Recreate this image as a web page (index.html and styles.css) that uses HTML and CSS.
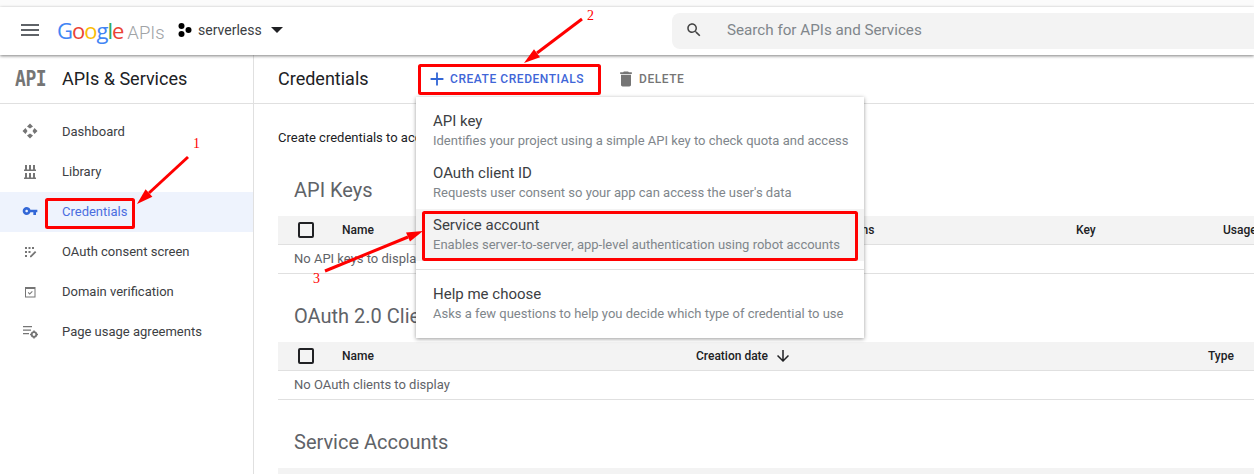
FILE: index.html
```html
<!DOCTYPE html>
<html lang="en">

<head>
  <meta charset="UTF-8" />
  <title>Credentials - APIs &amp; Services</title>
  <link rel="stylesheet" href="styles.css">
</head>

<body>
  <div class="top-strip"></div>

  <header class="topbar">
    <svg class="menu-icon" viewBox="0 0 24 24"><path d="M3 18h18v-2H3v2zm0-5h18v-2H3v2zm0-7v2h18V6H3z" /></svg>
    <div class="logo">
      <span class="logo-google"><span class="blue">G</span><span class="red">o</span><span class="yellow">o</span><span class="blue">g</span><span class="green">l</span><span class="red">e</span></span>
      <span class="logo-apis">APIs</span>
    </div>
    <div class="project">
      <svg class="project-dots" viewBox="0 0 14 14"><circle cx="3.500" cy="3" r="3" /><circle cx="3.500" cy="11" r="3" /><circle cx="10.500" cy="7" r="3" /></svg>
      <span>serverless</span>
      <span class="caret"></span>
    </div>
    <div class="search">
      <svg class="search-icon" viewBox="0 0 24 24"><path d="M15.500 14h-.79l-.28-.27C15.410 12.590 16 11.110 16 9.500 16 5.910 13.090 3 9.500 3S3 5.910 3 9.500 5.910 16 9.500 16c1.610 0 3.090-.59 4.230-1.570l.27.28v.79l5 4.990L20.490 19l-4.990-5zm-6 0C7.010 14 5 11.990 5 9.500S7.010 5 9.500 5 14 7.010 14 9.500 11.990 14 9.500 14z" /></svg>
      <span>Search for APIs and Services</span>
    </div>
  </header>

  <div class="main">
    <aside class="sidebar">
      <div class="sidebar-head">
        <span class="api-badge"><span class="api-text">API</span></span>
        <span>APIs &amp; Services</span>
      </div>
      <nav class="nav">
        <a class="nav-item">
          <svg viewBox="0 0 16 16"><path d="M8 .5L11 3.500 8 5.500 5 3.500zM8 15.500L5 12.500 8 10.500 11 12.500zM.5 8L3.500 5 5.500 8 3.500 11zM15.500 8L12.500 11 10.500 8 12.500 5z" /></svg>
          Dashboard
        </a>
        <a class="nav-item">
          <svg viewBox="0 0 16 16"><path d="M3 2h2v4.500H3zM7 2h2v4.500H7zM11 2h2v4.500h-2zM2 6.500h12V8H2zM3 10h2v4.500H3zM7 10h2v4.500H7zM11 10h2v4.500h-2zM2 14.500h12V16H2z" /></svg>
          Library
        </a>
        <a class="nav-item active">
          <svg viewBox="0 0 24 24"><path d="M12.650 10C11.830 7.670 9.610 6 7 6c-3.310 0-6 2.690-6 6s2.690 6 6 6c2.610 0 4.830-1.670 5.650-4H17v4h4v-4h2v-4H12.650zM7 14c-1.100 0-2-.9-2-2s.9-2 2-2 2 .9 2 2-.9 2-2 2z" /></svg>
          Credentials
        </a>
        <a class="nav-item">
          <svg viewBox="0 0 16 16"><path d="M3 4h2v2H3zM6.500 4h2v2h-2zM10 4h2v2h-2zM3 8h2v2H3zM6.500 8h2v2h-2zM3 12h2v2H3zM8 13l5-5 1.300 1.300-5 5H8z" /></svg>
          OAuth consent screen
        </a>
        <a class="nav-item">
          <svg viewBox="0 0 16 16"><path d="M3 4h10.500v10.500H3zM4 6v7.500h8.500V6z" fill-rule="evenodd" /><path d="M5.800 9.800l.7-.7 1.200 1.200 2.300-2.300.7.700-3 3z" /></svg>
          Domain verification
        </a>
        <a class="nav-item">
          <svg viewBox="0 0 16 16"><path d="M1 3h9v1.300H1zM1 6.500h8v1.300H1zM1 10h6v1.300H1z" /><circle cx="12" cy="11.500" r="2.300" fill="none" stroke="#757575" stroke-width="1.800" /><path d="M11.200 7.500h1.600v1.500h-1.600zM11.200 14h1.600v1.500h-1.600zM8 10.700h1.500v1.600H8zM14.500 10.700H16v1.600h-1.500z" /></svg>
          Page usage agreements
        </a>
      </nav>
    </aside>

    <section class="content">
      <div class="actionbar">
        <h1 class="page-title">Credentials</h1>
        <button class="btn btn-primary">
          <svg viewBox="0 0 24 24"><path d="M19 13h-6v6h-2v-6H5v-2h6V5h2v6h6v2z" /></svg>
          CREATE CREDENTIALS
        </button>
        <button class="btn btn-delete">
          <svg viewBox="0 0 24 24"><path d="M6 19c0 1.100.9 2 2 2h8c1.100 0 2-.9 2-2V7H6v12zM19 4h-3.500l-1-1h-5l-1 1H5v2h14V4z" /></svg>
          DELETE
        </button>
      </div>

      <div class="body">
        <p class="intro">Create credentials to access your enabled APIs</p>

        <h2 class="section-title first">API Keys</h2>
        <div class="table">
          <div class="table-head cols-keys">
            <span class="checkbox"></span>
            <span>Name</span>
            <span>Restrictions</span>
            <span>Key</span>
            <span>Usage</span>
          </div>
          <div class="table-empty">No API keys to display</div>
        </div>

        <h2 class="section-title">OAuth 2.0 Client IDs</h2>
        <div class="table">
          <div class="table-head cols-oauth">
            <span class="checkbox"></span>
            <span>Name</span>
            <span class="sorted">Creation date
              <svg viewBox="0 0 24 24"><path d="M20 12l-1.410-1.410L13 16.170V4h-2v12.170l-5.580-5.590L4 12l8 8 8-8z" /></svg>
            </span>
            <span>Type</span>
          </div>
          <div class="table-empty">No OAuth clients to display</div>
        </div>

        <h2 class="section-title">Service Accounts</h2>
        <div class="table">
          <div class="table-head"></div>
        </div>
      </div>

      <div class="menu">
        <div class="menu-item">
          <div class="menu-title">API key</div>
          <div class="menu-desc">Identifies your project using a simple API key to check quota and access</div>
        </div>
        <div class="menu-item">
          <div class="menu-title">OAuth client ID</div>
          <div class="menu-desc">Requests user consent so your app can access the user's data</div>
        </div>
        <div class="menu-item hover">
          <div class="menu-title">Service account</div>
          <div class="menu-desc">Enables server-to-server, app-level authentication using robot accounts</div>
        </div>
        <div class="menu-divider"></div>
        <div class="menu-item">
          <div class="menu-title">Help me choose</div>
          <div class="menu-desc">Asks a few questions to help you decide which type of credential to use</div>
        </div>
      </div>
    </section>
  </div>

  <!-- red marks drawn on top of the screenshot -->
  <svg class="marks" viewBox="0 0 1254 474">
    <rect x="46.500" y="199.500" width="87" height="28" rx="1" />
    <rect x="419.500" y="65.500" width="180" height="28" rx="1" />
    <rect x="423.500" y="212.500" width="433" height="47" rx="1" />
    <line x1="188" y1="157" x2="149" y2="193" />
    <polygon points="137,204 145.600,189.300 152.400,196.700" />
    <line x1="582" y1="19" x2="537" y2="53" />
    <polygon points="524,63 534,49.300 540,57.300" />
    <line x1="325" y1="271" x2="408" y2="237" />
    <polygon points="423,231 406,232.400 410,241.600" />
    <text x="193" y="148">1</text>
    <text x="587" y="20">2</text>
    <text x="313" y="283">3</text>
  </svg>
</body>

</html>
```

FILE: styles.css
```css
* {
  box-sizing: border-box;
  margin: 0;
  padding: 0;
}

html,
body {
  height: 474px;
  overflow: hidden;
}

body {
  font-family: Roboto, Arial, sans-serif;
  background-color: #fff;
  color: #202124;
  position: relative;
}

svg {
  flex-shrink: 0;
  display: block;
}

.top-strip {
  height: 7px;
  background-color: #fbfbfb;
}

/* Top bar */
.topbar {
  position: relative;
  z-index: 2;
  height: 48px;
  display: flex;
  align-items: center;
  background-color: #fff;
  box-shadow: 0 1px 3px rgba(0, 0, 0, 0.5);
}

.menu-icon {
  width: 24px;
  height: 24px;
  margin-left: 18px;
  margin-top: -3px;
  fill: #5f6368;
}

.logo {
  display: flex;
  align-items: baseline;
  margin-left: 15px;
  margin-top: -3px;
  white-space: nowrap;
}

.logo-google {
  font-family: "Open Sans", sans-serif;
  font-size: 22px;
  letter-spacing: -1px;
}

.logo-apis {
  margin-left: 4px;
  color: #a0a3a6;
  font-size: 18.500px;
  font-weight: 300;
}

.blue { color: #4285f4; }
.red { color: #ea4335; }
.yellow { color: #fbbc05; }
.green { color: #34a853; }

.project {
  display: flex;
  align-items: center;
  position: absolute;
  left: 178px;
  top: 15px;
  font-size: 14px;
  color: #3c4043;
}

.project-dots {
  width: 14px;
  height: 14px;
  margin-right: 6px;
  fill: #000;
}

.caret {
  width: 0;
  height: 0;
  margin-left: 9px;
  border-left: 6px solid transparent;
  border-right: 6px solid transparent;
  border-top: 6px solid #202124;
}

.search {
  width: 582px;
  height: 36px;
  margin-left: auto;
  display: flex;
  align-items: center;
  padding-bottom: 2px;
  background-color: #f3f3f3;
  border-radius: 8px 0 0 8px;
  font-size: 15.200px;
  color: #80868b;
}

.search-icon {
  width: 18px;
  height: 18px;
  margin-left: 13px;
  margin-right: 24px;
  fill: #444;
}

/* Sidebar and content */
.main {
  height: 419px;
  display: flex;
}

.sidebar {
  width: 254px;
  flex-shrink: 0;
  border-right: 1px solid #e0e0e0;
}

.sidebar-head {
  height: 49px;
  display: flex;
  align-items: center;
  padding-bottom: 2px;
  border-bottom: 1px solid #e0e0e0;
  font-size: 18px;
}

.api-badge {
  width: 62px;
  padding-left: 15px;
  font-family: "DejaVu Sans Mono", monospace;
  font-size: 18px;
  font-weight: bold;
  letter-spacing: -0.4px;
  color: #757575;
}

.api-text {
  display: inline-block;
  transform: scaleY(1.2);
}

.nav {
  padding-top: 8px;
}

.nav-item {
  height: 40px;
  display: flex;
  align-items: center;
  gap: 24px;
  padding-left: 22px;
  padding-bottom: 2px;
  font-size: 13px;
  color: #3c4043;
}

.nav-item svg {
  width: 16px;
  height: 16px;
  fill: #757575;
}

.nav-item.active {
  background-color: #eef3fd;
  color: #4a6ee0;
}

.nav-item.active svg {
  fill: #3367d6;
}

.content {
  flex: 1;
  min-width: 0;
  position: relative;
  overflow: hidden;
}

.actionbar {
  height: 49px;
  display: flex;
  align-items: center;
  padding-left: 24px;
  border-bottom: 1px solid #e0e0e0;
}

.page-title {
  width: 148px;
  margin-top: -2px;
  font-size: 18px;
  font-weight: 400;
}

.btn {
  display: flex;
  align-items: center;
  border: none;
  background: none;
  font-family: inherit;
  font-size: 12px;
  font-weight: 500;
  letter-spacing: 0.55px;
}

.btn-primary {
  gap: 2px;
  color: #3f66d8;
}

.btn-primary svg {
  width: 22px;
  height: 22px;
  fill: #3367d6;
}

.btn-delete {
  gap: 3px;
  margin-left: 32px;
  color: #757575;
}

.btn-delete svg {
  width: 20px;
  height: 20px;
  fill: #757575;
}

.body {
  padding: 26px 0 0 24px;
}

.intro {
  font-size: 13px;
  line-height: 16px;
  white-space: nowrap;
}

.section-title {
  height: 26px;
  margin: 0 0 13px 16px;
  font-size: 20px;
  font-weight: 400;
  line-height: 26px;
  color: #5f6368;
  white-space: nowrap;
}

.section-title.first {
  margin-top: 31px;
}

.table {
  width: 1000px;
}

.table + .section-title {
  margin-top: 29px;
}

.table-head {
  height: 29px;
  display: grid;
  align-items: center;
  background-color: #f3f3f3;
  border-bottom: 1px solid #e0e0e0;
  font-size: 12px;
  font-weight: 500;
  color: #202124;
  white-space: nowrap;
}

.cols-keys {
  grid-template-columns: 64px 468px 266px 147px 1fr;
}

.cols-oauth {
  grid-template-columns: 64px 354px 512px 1fr;
}

.checkbox {
  width: 16px;
  height: 16px;
  margin-left: 20px;
  border: 2px solid #202124;
  border-radius: 2px;
}

.sorted {
  display: flex;
  align-items: center;
  gap: 6px;
}

.sorted svg {
  width: 18px;
  height: 18px;
  fill: #202124;
}

.table-empty {
  height: 29px;
  padding-left: 16px;
  border-bottom: 1px solid #e0e0e0;
  font-size: 13px;
  line-height: 28px;
  color: #5f6368;
  white-space: nowrap;
}

/* Create credentials dropdown */
.menu {
  position: absolute;
  left: 162px;
  top: 42px;
  width: 448px;
  padding: 8px 0;
  background-color: #fff;
  box-shadow: 0 1px 4px rgba(0, 0, 0, 0.4);
}

.menu-item {
  height: 52px;
  padding: 6px 17px 0;
  white-space: nowrap;
}

.menu-item.hover {
  background-color: #f3f3f3;
}

.menu-title {
  font-size: 15px;
  line-height: 20px;
  color: #3c4043;
}

.menu-desc {
  font-size: 13px;
  line-height: 20px;
  color: #80868b;
}

.menu-divider {
  height: 1px;
  margin: 8px 0;
  background-color: #e0e0e0;
}

/* Annotations */
.marks {
  position: absolute;
  left: 0;
  top: 0;
  z-index: 5;
  width: 1254px;
  height: 474px;
  pointer-events: none;
}

.marks rect {
  fill: none;
  stroke: #f00;
  stroke-width: 3;
}

.marks line {
  stroke: #f00;
  stroke-width: 3;
}

.marks polygon {
  fill: #f00;
}

.marks text {
  font-family: "Liberation Serif", serif;
  font-size: 14px;
  fill: #f00;
}
```
